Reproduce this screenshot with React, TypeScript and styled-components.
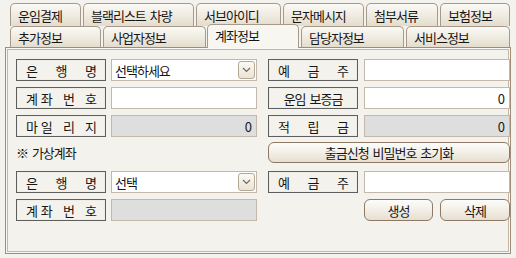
import React from "react";
import styled, { createGlobalStyle } from "styled-components";

const Global = createGlobalStyle`
  html, body { margin: 0; padding: 0; background: #f4f2ec; }
  body { font-family: "Noto Sans CJK KR", "Noto Sans", sans-serif; }
`;

const Root = styled.div`
  width: 516px;
  height: 258px;
  box-sizing: border-box;
  padding-top: 3px;
  background: #f4f2ec;
  font-family: "Noto Sans CJK KR", "Noto Sans", sans-serif;
  font-size: 13px;
  letter-spacing: -1px;
  word-spacing: 2px;
  color: #161616;
  overflow: hidden;
`;

const TabStrip = styled.div`
  padding-left: 10px;
`;

const TabRow = styled.div<{ $h: number }>`
  display: flex;
  align-items: flex-end;
  height: ${(p) => p.$h}px;
`;

const Tab = styled.div<{ $w: number; $ml: number; $active?: boolean }>`
  box-sizing: border-box;
  flex: none;
  width: ${(p) => p.$w}px;
  margin-left: ${(p) => p.$ml}px;
  height: ${(p) => (p.$active ? "24px" : "100%")};
  margin-bottom: ${(p) => (p.$active ? -1 : 0)}px;
  position: ${(p) => (p.$active ? "relative" : "static")};
  z-index: ${(p) => (p.$active ? 2 : "auto")};
  border: 1px solid #a8998a;
  border-bottom: none;
  border-radius: 5px 5px 0 0;
  background: ${(p) =>
    p.$active ? "#f7f6f1" : "linear-gradient(#faf9f5, #f1ede4 45%, #e4ddcd)"};
  padding: ${(p) => (p.$active ? "0 0 2px 7px" : "0 0 0 7px")};
  display: flex;
  align-items: center;
  white-space: pre;
`;

const Panel = styled.div`
  margin: 0 5px;
  height: 207px;
  box-sizing: border-box;
  border: 1px solid #a08c78;
  box-shadow: inset 0 0 0 1px #f8f7f3, inset 0 0 0 2px #c5b7a6;
  background: #f4f2ec;
  padding: 11px 0 0 10px;
`;

const Row = styled.div<{ $mt: number; $h?: number }>`
  display: flex;
  gap: 11px;
  height: ${(p) => p.$h ?? 22}px;
  margin-top: ${(p) => p.$mt}px;
`;

const Half = styled.div<{ $w: number; $gap: number }>`
  display: flex;
  width: ${(p) => p.$w}px;
  gap: ${(p) => p.$gap}px;
  align-items: stretch;
`;

const Label = styled.div`
  box-sizing: border-box;
  flex: none;
  width: 90px;
  border: 1px solid #5e5e5e;
  box-shadow: inset 0 0 0 1px #efede7;
  background: #f4f2ec;
  display: flex;
  align-items: center;
  justify-content: space-between;
  padding: 0 9px 0 9px;
  white-space: pre;
`;

const CenterLabel = styled(Label)`
  justify-content: center;
`;

const Input = styled.div<{ $gray?: boolean }>`
  box-sizing: border-box;
  flex: none;
  width: 146px;
  border: 1px solid #c4b8aa;
  background: ${(p) => (p.$gray ? "#dedede" : "#ffffff")};
  display: flex;
  align-items: center;
  justify-content: flex-end;
  padding: 0 5px 0 4px;
  font-size: 13px;
`;

const Select = styled.div`
  box-sizing: border-box;
  flex: none;
  width: 146px;
  border: 1px solid #c4b8aa;
  background: #ffffff;
  display: flex;
  align-items: center;
  justify-content: space-between;
  padding: 0 0 0 3px;
`;

const DropButton = styled.div`
  box-sizing: border-box;
  width: 17px;
  height: 18px;
  margin-right: 1px;
  border: 1px solid #b6a692;
  border-radius: 3px;
  background: linear-gradient(#fbfaf6, #e9e3d7);
  display: flex;
  align-items: center;
  justify-content: center;
`;

const Note = styled.div`
  display: flex;
  align-items: center;
  width: 241px;
  font-size: 13px;
`;

const Button = styled.button<{ $w: number }>`
  box-sizing: border-box;
  width: ${(p) => p.$w}px;
  height: 100%;
  margin: 0;
  padding: 0;
  border: 1px solid #8d7966;
  border-radius: 6px;
  background: linear-gradient(#fdfcfa, #f3efe7 50%, #e6dfd1);
  font-family: inherit;
  font-size: 13px;
  letter-spacing: -1px;
  word-spacing: 2px;
  color: #161616;
  display: flex;
  align-items: center;
  justify-content: center;
`;

const ButtonGroup = styled.div`
  display: flex;
  gap: 7px;
  margin-left: 96px;
`;

const Chevron = () => (
  <svg width="9" height="6" viewBox="0 0 9 6">
    <path d="M1 1 L4.5 4.5 L8 1" fill="none" stroke="#7a6856" strokeWidth="1.2" />
  </svg>
);

const row1 = [
  { t: "운임결제", w: 71, ml: 0 },
  { t: "블랙리스트 차량", w: 111, ml: 2 },
  { t: "서브아이디", w: 85, ml: 2 },
  { t: "문자메시지", w: 81, ml: 2 },
  { t: "첨부서류", w: 72, ml: 2 },
  { t: "보험정보", w: 70, ml: 2 },
];

const row2 = [
  { t: "추가정보", w: 91, ml: 0 },
  { t: "사업자정보", w: 103, ml: 2 },
  { t: "계좌정보", w: 92, ml: 1, active: true },
  { t: "담당자정보", w: 103, ml: 2 },
  { t: "서비스정보", w: 104, ml: 2 },
];

const Spread = ({ parts }: { parts: string[] }) => (
  <Label>
    {parts.map((p, i) => (
      <span key={i}>{p}</span>
    ))}
  </Label>
);

export default function App() {
  return (
    <Root>
      <Global />
      <TabStrip>
        <TabRow $h={23}>
          {row1.map((t) => (
            <Tab key={t.t} $w={t.w} $ml={t.ml}>
              {t.t}
            </Tab>
          ))}
        </TabRow>
        <TabRow $h={21}>
          {row2.map((t) => (
            <Tab key={t.t} $w={t.w} $ml={t.ml} $active={t.active}>
              {t.t}
            </Tab>
          ))}
        </TabRow>
      </TabStrip>
      <Panel>
        <Row $mt={0}>
          <Half $w={241} $gap={5}>
            <Spread parts={["은", "행", "명"]} />
            <Select>
              <span>선택하세요</span>
              <DropButton>
                <Chevron />
              </DropButton>
            </Select>
          </Half>
          <Half $w={242} $gap={6}>
            <Spread parts={["예", "금", "주"]} />
            <Input />
          </Half>
        </Row>
        <Row $mt={6}>
          <Half $w={241} $gap={5}>
            <Spread parts={["계 좌", "번", "호"]} />
            <Input />
          </Half>
          <Half $w={242} $gap={6}>
            <CenterLabel>운임 보증금</CenterLabel>
            <Input>0</Input>
          </Half>
        </Row>
        <Row $mt={6}>
          <Half $w={241} $gap={5}>
            <Spread parts={["마 일", "리", "지"]} />
            <Input $gray>0</Input>
          </Half>
          <Half $w={242} $gap={6}>
            <Spread parts={["적", "립", "금"]} />
            <Input $gray>0</Input>
          </Half>
        </Row>
        <Row $mt={5} $h={21}>
          <Note>※ 가상계좌</Note>
          <Button $w={242}>출금신청 비밀번호 초기화</Button>
        </Row>
        <Row $mt={8}>
          <Half $w={241} $gap={5}>
            <Spread parts={["은", "행", "명"]} />
            <Select>
              <span>선택</span>
              <DropButton>
                <Chevron />
              </DropButton>
            </Select>
          </Half>
          <Half $w={242} $gap={6}>
            <Spread parts={["예", "금", "주"]} />
            <Input />
          </Half>
        </Row>
        <Row $mt={6}>
          <Half $w={241} $gap={5}>
            <Spread parts={["계 좌", "번", "호"]} />
            <Input $gray />
          </Half>
          <Half $w={242} $gap={0}>
            <ButtonGroup>
              <Button $w={69}>생성</Button>
              <Button $w={70}>삭제</Button>
            </ButtonGroup>
          </Half>
        </Row>
      </Panel>
    </Root>
  );
}
